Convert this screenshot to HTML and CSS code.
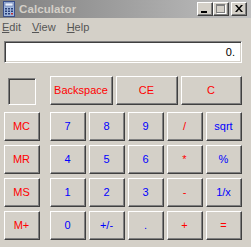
FILE: index.html
```html
<!DOCTYPE html>
<html>
<head>
<meta charset="utf-8">
<link rel="stylesheet" href="styles.css">
</head>
<body>
<div class="window">
  <div class="titlebar">
    <svg class="app-icon" width="12" height="16" viewBox="0 0 12 16">
      <rect x="0.5" y="0.5" width="11" height="15" fill="#9fb6dc" stroke="#3a4f8a"/>
      <rect x="2" y="2" width="8" height="3" fill="#e8f0ff" stroke="#5a6fa0" stroke-width="0.6"/>
      <g fill="#2a3f7a">
        <rect x="2" y="7" width="2" height="1.5"/><rect x="5" y="7" width="2" height="1.5"/><rect x="8" y="7" width="2" height="1.5"/>
        <rect x="2" y="9.5" width="2" height="1.5"/><rect x="5" y="9.5" width="2" height="1.5"/><rect x="8" y="9.5" width="2" height="1.5"/>
        <rect x="2" y="12" width="2" height="1.5"/><rect x="5" y="12" width="2" height="1.5"/><rect x="8" y="12" width="2" height="1.5" fill="#c03030"/>
      </g>
    </svg>
    <span class="title">Calculator</span>
    <div class="caption-btns">
      <div class="cap"><span class="min-glyph"></span></div>
      <div class="cap"><span class="max-glyph"></span></div>
      <div class="cap close">
        <svg width="8" height="7" viewBox="0 0 8 7"><path d="M0 0h2l2 2.5L6 0h2L5 3.5 8 7H6L4 4.5 2 7H0l3-3.5z" fill="#000"/></svg>
      </div>
    </div>
  </div>
  <div class="menubar">
    <span class="menu"><u>E</u>dit</span>
    <span class="menu"><u>V</u>iew</span>
    <span class="menu"><u>H</u>elp</span>
  </div>
  <div class="display">0.</div>
  <div class="keys">
    <div class="mem-col">
      <div class="mem-ind"></div>
      <div class="key red">MC</div>
      <div class="key red">MR</div>
      <div class="key red">MS</div>
      <div class="key red">M+</div>
    </div>
    <div class="main-col">
      <div class="top-row">
        <div class="key red bs">Backspace</div>
        <div class="key red ce">CE</div>
        <div class="key red c">C</div>
      </div>
      <div class="grid">
        <div class="key blue">7</div>
        <div class="key blue">8</div>
        <div class="key blue">9</div>
        <div class="key red">/</div>
        <div class="key blue">sqrt</div>
        <div class="key blue">4</div>
        <div class="key blue">5</div>
        <div class="key blue">6</div>
        <div class="key red">*</div>
        <div class="key blue">%</div>
        <div class="key blue">1</div>
        <div class="key blue">2</div>
        <div class="key blue">3</div>
        <div class="key red">-</div>
        <div class="key blue">1/x</div>
        <div class="key blue">0</div>
        <div class="key blue">+/-</div>
        <div class="key blue">.</div>
        <div class="key red">+</div>
        <div class="key red">=</div>
      </div>
    </div>
  </div>
</div>
</body>
</html>
```

FILE: styles.css
```css
html, body {
  margin: 0;
  padding: 0;
  background: #d4d0c8;
}
body {
  font-family: "Liberation Sans", Arial, sans-serif;
  font-size: 11px;
  width: 251px;
  height: 247px;
  overflow: hidden;
}
.window {
  width: 251px;
}
.titlebar {
  height: 18px;
  display: flex;
  align-items: center;
  background: linear-gradient(to right, #808080, #c0c0c0);
  padding: 0 4px 0 3px;
  box-sizing: border-box;
}
.app-icon {
  flex: none;
  margin-right: 4px;
}
.title {
  color: #d4d0c8;
  font-weight: bold;
  font-size: 11.5px;
  letter-spacing: 0.1px;
}
.caption-btns {
  margin-left: auto;
  display: flex;
  gap: 0;
}
.cap {
  width: 16px;
  height: 14px;
  box-sizing: border-box;
  background: #d4d0c8;
  border: 1px solid;
  border-color: #fff #404040 #404040 #fff;
  box-shadow: inset -1px -1px #808080;
  position: relative;
}
.cap.close {
  margin-left: 2px;
  display: flex;
  align-items: center;
  justify-content: center;
  padding: 0 1px 1px 0;
}
.min-glyph {
  position: absolute;
  left: 3px;
  top: 8px;
  width: 6px;
  height: 2px;
  background: #000;
}
.max-glyph {
  position: absolute;
  left: 2px;
  top: 1px;
  width: 9px;
  height: 9px;
  box-sizing: border-box;
  border: 1px solid #808080;
  border-top-width: 2px;
  box-shadow: 1px 1px #fff;
}
.menubar {
  height: 18px;
  display: flex;
  align-items: center;
  padding-left: 2px;
  color: #555;
}
.menu {
  margin-right: 11px;
}
.menu u {
  text-decoration: underline;
  text-underline-offset: 1px;
}
.display {
  margin: 5px 0 0 4px;
  width: 238px;
  height: 22px;
  box-sizing: border-box;
  background: #fff;
  border: 1px solid;
  border-color: #808080 #fff #fff #808080;
  box-shadow: inset 1px 1px #404040, inset -1px -1px #d4d0c8;
  text-align: right;
  padding: 4px 6px 0 0;
  color: #000;
}
.keys {
  display: flex;
  margin-top: 13px;
  padding-left: 4px;
}
.mem-col {
  display: flex;
  flex-direction: column;
  gap: 4px;
  width: 36px;
}
.mem-ind {
  width: 28px;
  height: 27px;
  margin: 2px 0 3px 4px;
  box-sizing: border-box;
  border: 1px solid;
  border-color: #808080 #fff #fff #808080;
  box-shadow: inset 1px 1px #404040;
}
.main-col {
  margin-left: 10px;
  display: flex;
  flex-direction: column;
}
.top-row {
  display: flex;
  gap: 3px;
  margin-bottom: 7px;
}
.grid {
  display: grid;
  grid-template-columns: repeat(5, 36px);
  grid-auto-rows: 29px;
  column-gap: 3px;
  row-gap: 4px;
}
.key {
  height: 29px;
  box-sizing: border-box;
  background: #d4d0c8;
  border: 1px solid;
  border-color: #fff #404040 #404040 #fff;
  box-shadow: inset -1px -1px #808080;
  display: flex;
  align-items: center;
  justify-content: center;
  padding: 0 1px 1px 0;
}
.mem-col .key {
  width: 36px;
}
.bs { width: 63px; }
.ce { width: 62px; }
.c { width: 61px; }
.red { color: #ff0000; }
.blue { color: #0000ff; }
```
